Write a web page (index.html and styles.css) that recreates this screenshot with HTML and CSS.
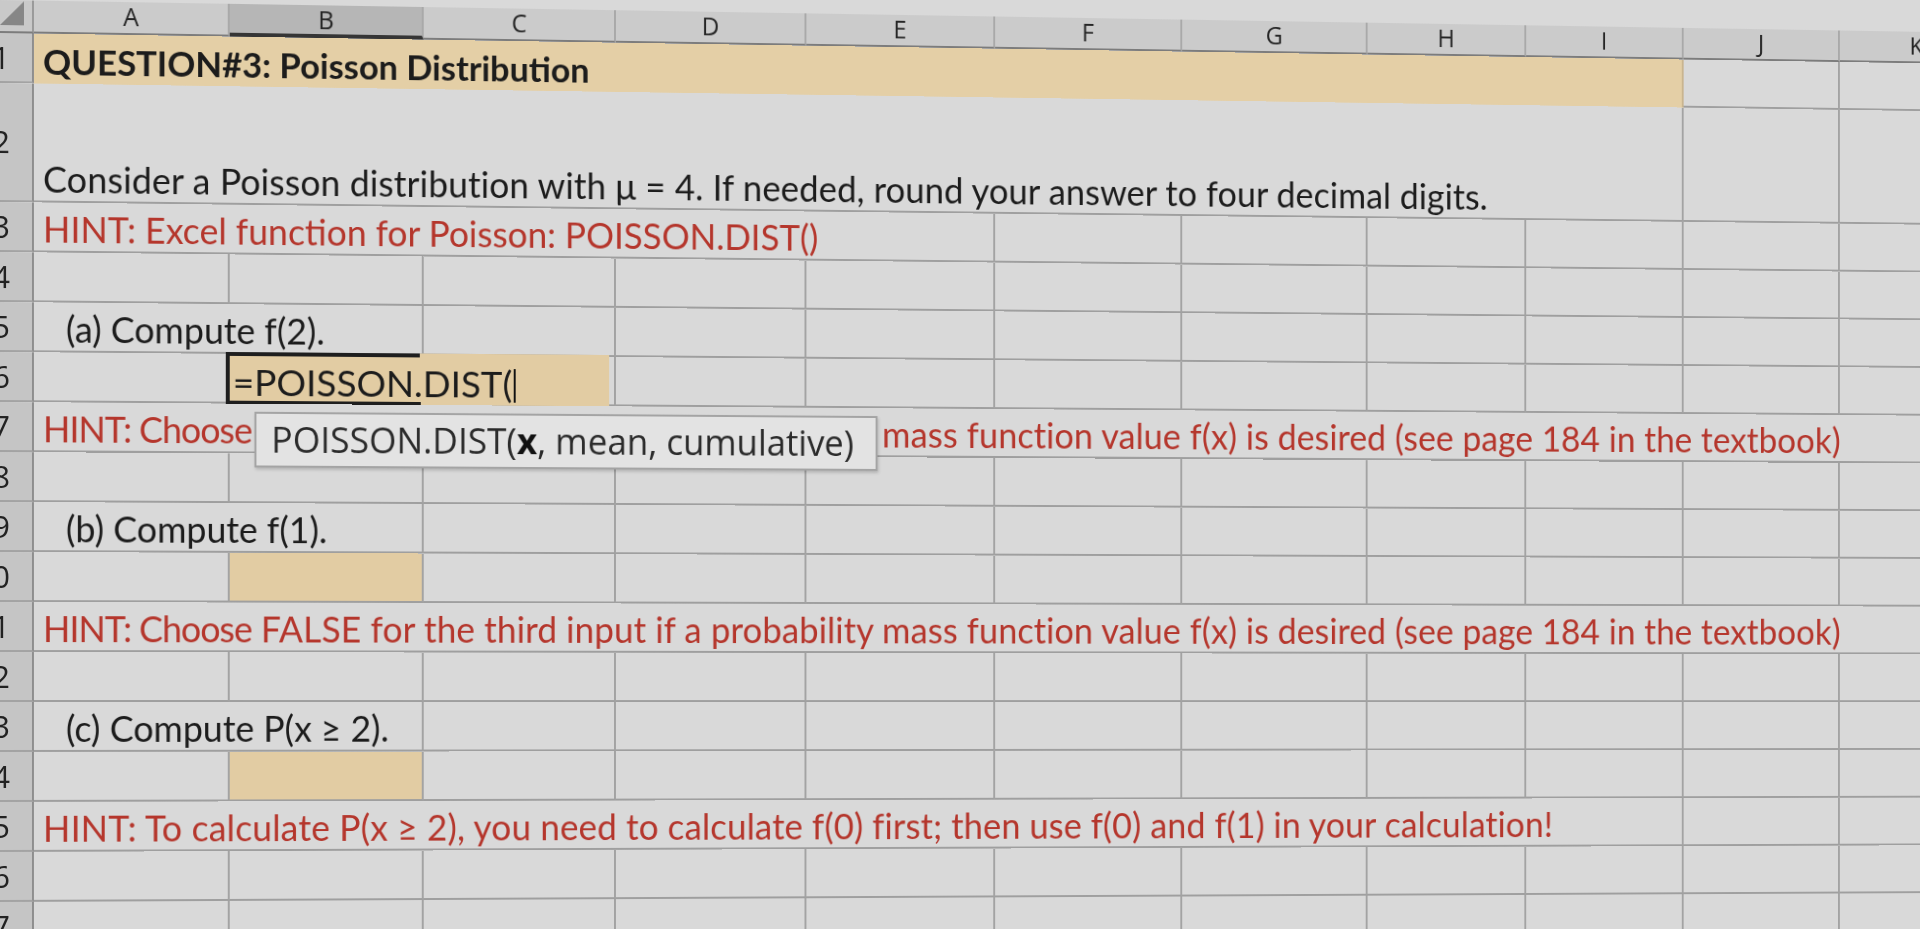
FILE: index.html
```html
<!DOCTYPE html>
<html lang="en">
<head>
<meta charset="utf-8">
<title>QUESTION#3: Poisson Distribution</title>
<link rel="stylesheet" href="styles.css">
</head>
<body>
<div class="sheet">
  <!-- column headers -->
  <div class="corner"><svg class="selall" viewBox="0 0 24 24" width="24" height="24"><polygon points="0,24 24,24 24,0" fill="#868686"/></svg></div>
  <div class="ch">A</div><div class="ch sel">B</div><div class="ch">C</div><div class="ch">D</div><div class="ch">E</div><div class="ch">F</div><div class="ch">G</div><div class="ch">H</div><div class="ch">I</div><div class="ch">J</div><div class="ch">K</div>

  <!-- row 1 -->
  <div class="rh">1</div>
  <div class="c s9 title">QUESTION#3: Poisson Distribution</div>
  <div class="c"></div><div class="c"></div>

  <!-- row 2 -->
  <div class="rh">2</div>
  <div class="c s9 wide">Consider a Poisson distribution with μ = 4. If needed, round your answer to four decimal digits.</div>
  <div class="c"></div><div class="c"></div>

  <!-- row 3 -->
  <div class="rh">3</div>
  <div class="c s5 hint">HINT: Excel function for Poisson: POISSON.DIST()</div>
  <div class="c"></div><div class="c"></div><div class="c"></div><div class="c"></div><div class="c"></div><div class="c"></div>

  <!-- row 4 -->
  <div class="rh">4</div>
  <div class="c"></div><div class="c"></div><div class="c"></div><div class="c"></div><div class="c"></div><div class="c"></div><div class="c"></div><div class="c"></div><div class="c"></div><div class="c"></div><div class="c"></div>

  <!-- row 5 -->
  <div class="rh">5</div>
  <div class="c s2 ind">(a) Compute f(2).</div>
  <div class="c"></div><div class="c"></div><div class="c"></div><div class="c"></div><div class="c"></div><div class="c"></div><div class="c"></div><div class="c"></div><div class="c"></div>

  <!-- row 6 -->
  <div class="rh">6</div>
  <div class="c"></div>
  <div class="c s2 edit">
    <div class="editor"><span class="ftext">=POISSON.DIST(</span><span class="caret"></span></div>
    <div class="selbox"></div>
    <div class="handle"></div>
  </div>
  <div class="c"></div><div class="c"></div><div class="c"></div><div class="c"></div><div class="c"></div><div class="c"></div><div class="c"></div><div class="c"></div>

  <!-- row 7 -->
  <div class="rh">7</div>
  <div class="c s11 hint long tipcell"><span class="tight">HINT: Choose</span>&nbsp;FALSE for the third input if a probability mass function value f(x) is desired (see page 184 in the textbook)
    <div class="tooltip">POISSON.DIST(<b>x</b>, mean, cumulative)</div>
  </div>

  <!-- row 8 -->
  <div class="rh">8</div>
  <div class="c"></div><div class="c"></div><div class="c"></div><div class="c"></div><div class="c"></div><div class="c"></div><div class="c"></div><div class="c"></div><div class="c"></div><div class="c"></div><div class="c"></div>

  <!-- row 9 -->
  <div class="rh">9</div>
  <div class="c s2 ind">(b) Compute f(1).</div>
  <div class="c"></div><div class="c"></div><div class="c"></div><div class="c"></div><div class="c"></div><div class="c"></div><div class="c"></div><div class="c"></div><div class="c"></div>

  <!-- row 10 -->
  <div class="rh">10</div>
  <div class="c"></div><div class="c answer"></div>
  <div class="c"></div><div class="c"></div><div class="c"></div><div class="c"></div><div class="c"></div><div class="c"></div><div class="c"></div><div class="c"></div><div class="c"></div>

  <!-- row 11 -->
  <div class="rh">11</div>
  <div class="c s11 hint long"><span class="tight">HINT: Choose</span>&nbsp;FALSE for the third input if a probability mass function value f(x) is desired (see page 184 in the textbook)</div>

  <!-- row 12 -->
  <div class="rh">12</div>
  <div class="c"></div><div class="c"></div><div class="c"></div><div class="c"></div><div class="c"></div><div class="c"></div><div class="c"></div><div class="c"></div><div class="c"></div><div class="c"></div><div class="c"></div>

  <!-- row 13 -->
  <div class="rh">13</div>
  <div class="c s2 ind">(c) Compute P(x ≥ 2).</div>
  <div class="c"></div><div class="c"></div><div class="c"></div><div class="c"></div><div class="c"></div><div class="c"></div><div class="c"></div><div class="c"></div><div class="c"></div>

  <!-- row 14 -->
  <div class="rh">14</div>
  <div class="c"></div><div class="c answer"></div>
  <div class="c"></div><div class="c"></div><div class="c"></div><div class="c"></div><div class="c"></div><div class="c"></div><div class="c"></div><div class="c"></div><div class="c"></div>

  <!-- row 15 -->
  <div class="rh">15</div>
  <div class="c s9 hint wide">HINT: To calculate P(x ≥ 2), you need to calculate f(0) first; then use f(0) and f(1) in your calculation!</div>
  <div class="c"></div><div class="c"></div>

  <!-- row 16 -->
  <div class="rh">16</div>
  <div class="c"></div><div class="c"></div><div class="c"></div><div class="c"></div><div class="c"></div><div class="c"></div><div class="c"></div><div class="c"></div><div class="c"></div><div class="c"></div><div class="c"></div>

  <!-- row 17 -->
  <div class="rh">17</div>
  <div class="c"></div><div class="c"></div><div class="c"></div><div class="c"></div><div class="c"></div><div class="c"></div><div class="c"></div><div class="c"></div><div class="c"></div><div class="c"></div><div class="c"></div>
</div>
</body>
</html>
```

FILE: styles.css
```css
html, body {
  margin: 0;
  padding: 0;
  overflow: hidden;
  background: #d9d9d9;
}

body {
  width: 1920px;
  height: 929px;
}

/* the photographed screen is slightly turned away on the right side */
.sheet {
  display: grid;
  grid-template-columns: 34px repeat(7, 197px) repeat(4, 170px);
  grid-template-rows: 33px 50px 119px repeat(15, 50px);
  width: 2093px;
  transform-origin: 0 0;
  transform: matrix3d(1, 0.0165675, 0, 0.0000235, 0, 1, 0, 0, 0, 0, 1, 0, 0, 0, 0, 1);
  font-family: Lato, "Open Sans", sans-serif;
  color: #1c1c1c;
}

/* corner + column headers */
.corner {
  background: #c9c9c9;
  border-right: 2px solid #9a9a9a;
  border-bottom: 2px solid #7c7c7c;
  box-sizing: border-box;
  display: flex;
  align-items: flex-end;
  justify-content: flex-end;
  padding: 0 8px 6px 0;
}

.selall {
  display: block;
}

.ch {
  background: #cbcbcb;
  border-right: 2px solid #a9a9a9;
  border-bottom: 2px solid #7c7c7c;
  box-sizing: border-box;
  display: flex;
  justify-content: center;
  align-items: flex-start;
  font-family: "Open Sans", sans-serif;
  font-size: 25px;
  line-height: 28px;
  font-weight: 400;
  color: #262626;
}

.ch.sel {
  background: #b6b6b6;
  border-bottom: 4px solid #353535;
}

/* row headers */
.rh {
  background: #c5c5c5;
  border-right: 2px solid #8e8e8e;
  border-bottom: 2px solid #a3a3a3;
  box-sizing: border-box;
  display: flex;
  align-items: center;
  justify-content: flex-end;
  padding-right: 22px;
  overflow: hidden;
  font-family: "Open Sans", sans-serif;
  font-size: 31px;
  line-height: 1;
  color: #222;
}

/* cells */
.c {
  background: #d9d9d9;
  border-right: 2px solid #a3a3a3;
  border-bottom: 2px solid #9f9f9f;
  box-sizing: border-box;
  display: flex;
  align-items: flex-end;
  padding: 0 0 4px 9px;
  white-space: nowrap;
  font-size: 36px;
  line-height: 1;
  min-width: 0;
}

.s2 { grid-column: span 2; }
.s5 { grid-column: span 5; }
.s9 { grid-column: span 9; }
.s11 { grid-column: span 11; }

.title {
  background: #e4cfa6;
  border-bottom: none;
  border-right-color: #c9b58f;
  font-weight: 700;
  font-size: 35px;
  padding-bottom: 5px;
}

.wide {
  letter-spacing: 0.15px;
}

.long {
  letter-spacing: 0.1px;
}

.tight {
  letter-spacing: -1px;
}

.hint {
  color: #b5362c;
}

.ind {
  padding-left: 32px;
}

.answer {
  background: #e2cca3;
}

/* active cell in edit mode */
.edit {
  position: relative;
  padding: 0;
}

.editor {
  position: absolute;
  left: -4px;
  top: -2px;
  bottom: -2px;
  right: 5px;
  background: #e2cca3;
  display: flex;
  align-items: flex-end;
  padding: 0 0 4px 7px;
  font-size: 37.5px;
  line-height: 1;
  color: #1c1c1c;
}

.caret {
  display: inline-block;
  width: 2px;
  height: 34px;
  background: #111;
  margin-left: 1px;
  margin-bottom: -1px;
}

.selbox {
  position: absolute;
  left: -4px;
  top: -2px;
  width: 197px;
  bottom: -3px;
  border: 4px solid #1e1e1e;
  border-right: none;
  box-sizing: border-box;
}

.handle {
  position: absolute;
  left: 184px;
  bottom: -7px;
  width: 10px;
  height: 8px;
  background: #1e1e1e;
}

/* function argument tooltip */
.tipcell {
  position: relative;
}

.tooltip {
  position: absolute;
  left: 222px;
  top: 8px;
  width: 640px;
  height: 56px;
  box-sizing: border-box;
  background: #e3e3e3;
  border: 2px solid #a4a4a4;
  box-shadow: 1px 2px 3px rgba(0, 0, 0, 0.18);
  display: flex;
  align-items: center;
  padding-left: 15px;
  font-family: "Open Sans", sans-serif;
  font-size: 36px;
  line-height: 1;
  letter-spacing: 0;
  color: #2b2b2b;
}

.tooltip b {
  font-weight: 700;
  color: #111;
}
```
